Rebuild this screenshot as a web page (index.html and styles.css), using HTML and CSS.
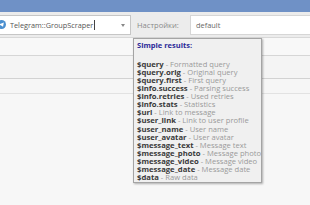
FILE: index.html
```html
<!DOCTYPE html>
<html>
<head>
<meta charset="utf-8">
<link rel="stylesheet" href="styles.css">
</head>
<body>
<div class="topbar"></div>
<div class="toolbar">
  <div class="combo">
    <svg class="tg" width="9" height="9" viewBox="0 0 10 10"><circle cx="5" cy="5" r="5" fill="#4a8fcf"/><path d="M2 5.1 L7.6 2.8 L6.7 7.4 L4.6 6 Z" fill="#fff"/></svg>
    <span class="combo-text">Telegram::GroupScraper</span><span class="caret"></span>
    <span class="arrow"></span>
  </div>
  <span class="label">Настройки:</span>
  <div class="field">default</div>
</div>
<div class="rows">
  <div class="row r1"></div>
  <div class="row r2"></div>
  <div class="row r3"></div>
</div>
<div class="tooltip">
  <div class="tt-title">Simple results:</div>
  <ul class="tt-list">
    <li><b>$query</b><span class="d"> - Formatted query</span></li>
    <li><b>$query.orig</b><span class="d"> - Original query</span></li>
    <li><b>$query.first</b><span class="d"> - First query</span></li>
    <li><b>$info.success</b><span class="d"> - Parsing success</span></li>
    <li><b>$info.retries</b><span class="d"> - Used retries</span></li>
    <li><b>$info.stats</b><span class="d"> - Statistics</span></li>
    <li><b>$url</b><span class="d"> - Link to message</span></li>
    <li><b>$user_link</b><span class="d"> - Link to user profile</span></li>
    <li><b>$user_name</b><span class="d"> - User name</span></li>
    <li><b>$user_avatar</b><span class="d"> - User avatar</span></li>
    <li><b>$message_text</b><span class="d"> - Message text</span></li>
    <li><b>$message_photo</b><span class="d"> - Message photo</span></li>
    <li><b>$message_video</b><span class="d"> - Message video</span></li>
    <li><b>$message_date</b><span class="d"> - Message date</span></li>
    <li><b>$data</b><span class="d"> - Raw data</span></li>
  </ul>
</div>
</body>
</html>
```
FILE: styles.css
```css
html, body { margin: 0; padding: 0; }
body {
  width: 310px; height: 205px; overflow: hidden;
  background: #f7f7f7;
  font-family: "Open Sans", "DejaVu Sans", sans-serif;
  position: relative;
}
.topbar { height: 12px; background: #6f91c6; }
.toolbar {
  height: 26px; background: #ececec;
  display: flex; align-items: center;
  border-bottom: 1px solid #d8d8d8;
  box-sizing: border-box;
}
.combo {
  width: 134px; height: 20px; margin-left: -3px;
  background: #fff; border: 1px solid #c6c6c6; box-sizing: border-box;
  display: flex; align-items: center; position: relative;
}
.tg { margin-left: -1px; }
.combo-text { font-size: 7.3px; color: #555; margin-left: 4px; }
.caret { width: 1px; height: 10px; background: #444; margin-left: 1px; }
.arrow {
  position: absolute; right: 5px; top: 8px;
  width: 0; height: 0;
  border-left: 2.5px solid transparent; border-right: 2.5px solid transparent;
  border-top: 3px solid #888;
}
.label { font-size: 7.6px; color: #8a8a8a; margin-left: 6px; width: 53px; }
.field {
  flex: 1; height: 20px; background: #fff; border: 1px solid #d6d6d6;
  border-right: none;
  box-sizing: border-box; font-size: 7.4px; color: #666;
  display: flex; align-items: center; padding-left: 5px;
}
.rows { display: flex; flex-direction: column; }
.row { box-sizing: border-box; }
.r1 { height: 18px; background: #f8f8f8; border-bottom: 1px solid #d6d6d6; }
.r2 { height: 23px; background: #f4f4f4; border-bottom: 1px solid #d2d2d2; }
.r3 { height: 15px; background: #f6f6f6; border-bottom: 1px solid #e2e2e2; }
.tooltip {
  position: absolute; left: 133px; top: 38px;
  width: 129px; height: 145px; box-sizing: border-box;
  background: #f0f0f0; border: 1px solid #a4a4a4;
  box-shadow: 1px 1px 2px rgba(0,0,0,0.3);
  padding: 2px 3px; overflow: hidden;
}
.tt-title { font-size: 7.5px; font-weight: bold; color: #2c2a98; line-height: 9px; }
.tt-list { list-style: none; margin: 10px 0 0 0; padding: 0; }
.tt-list li { font-size: 7.7px; line-height: 8.07px; height: 8.07px; white-space: nowrap; }
.tt-list b { color: #3a3a3a; }
.d { color: #9a9a9a; font-size: 7.6px; }
```
